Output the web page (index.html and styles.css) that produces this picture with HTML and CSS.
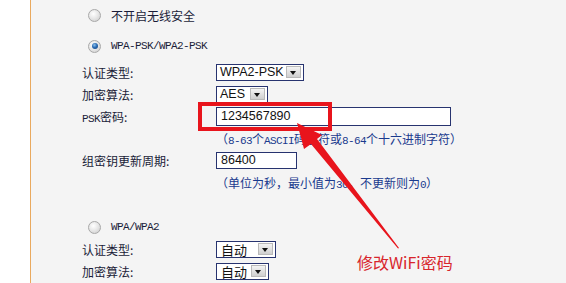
FILE: index.html
```html
<!DOCTYPE html>
<html>
<head>
<meta charset="utf-8">
<link rel="stylesheet" href="styles.css">
</head>
<body>
<div class="page">
  <div class="gutter"></div>
  <div class="panel">
    <div class="radio-row r1"><span class="radio"></span><span class="cn">不开启无线安全</span></div>
    <div class="radio-row r2"><span class="radio checked"></span><span class="en">WPA-PSK/WPA2-PSK</span></div>
    <div class="form first">
      <div class="row"><span class="label">认证类型:</span><div class="select w88"><span class="val">WPA2-PSK</span><span class="btn"></span></div></div>
      <div class="row"><span class="label">加密算法:</span><div class="select w52"><span class="val">AES</span><span class="btn"></span></div></div>
      <div class="row"><span class="label"><span class="en">PSK</span>密码:</span><div class="input w235">1234567890</div></div>
      <div class="row"><span class="label"></span><span class="hint">（<span class="en">8-63</span>个<span class="en">ASCII</span>码字符或<span class="en">8-64</span>个十六进制字符）</span></div>
      <div class="row"><span class="label">组密钥更新周期:</span><div class="input w81">86400</div></div>
      <div class="row"><span class="label"></span><span class="hint">（单位为秒，最小值为<span class="en">30</span>，不更新则为<span class="en">0</span>）</span></div>
    </div>
    <div class="radio-row r3"><span class="radio"></span><span class="en">WPA/WPA2</span></div>
    <div class="form">
      <div class="row"><span class="label">认证类型:</span><div class="select w60"><span class="val cnv">自动</span><span class="btn"></span></div></div>
      <div class="row"><span class="label">加密算法:</span><div class="select w53"><span class="val cnv">自动</span><span class="btn"></span></div></div>
    </div>
  </div>
  <div class="right"></div>
</div>
<div class="redbox"></div>
<svg class="arrow" width="566" height="283" viewBox="0 0 566 283">
  <polygon fill="#e8141c" points="297,123 322,135 317,139 399,248 398,248.5 311,144 304,149"/>
</svg>
<div class="note">修改WiFi密码</div>
</body>
</html>
```

FILE: styles.css
```css
html, body {
  margin: 0;
  padding: 0;
  background: #ffffff;
}
body {
  position: relative;
  width: 566px;
  height: 283px;
  overflow: hidden;
  font-family: "Noto Sans CJK SC", sans-serif;
  font-size: 12px;
  color: #1a1c38;
}
.page {
  display: flex;
  height: 283px;
}
.gutter {
  width: 30px;
  flex: none;
}
.panel {
  width: 500px;
  flex: none;
  background: #f4f4f4;
  border-left: 1px solid #e9a95e;
  border-right: 1px solid #e9a95e;
  padding: 4px 0 0 51px;
  box-sizing: content-box;
}
.right {
  flex: 1;
  background: #fffffc;
}
.en {
  font-family: "Liberation Mono", monospace;
  font-size: 11px;
  letter-spacing: -0.6px;
}
.radio-row {
  display: flex;
  align-items: center;
  height: 22px;
  padding-left: 6px;
}
.r2 { margin-top: 9px; }
.r3 { margin-top: 23px; }
.radio {
  width: 11px;
  height: 11px;
  border-radius: 50%;
  border: 1px solid #a8a8a8;
  background: radial-gradient(circle at 40% 35%, #ffffff 0%, #e6e6e6 50%, #c9c9c9 100%);
  margin-right: 10px;
  position: relative;
  flex: none;
}
.radio.checked::after {
  content: "";
  position: absolute;
  left: 2.5px;
  top: 2.5px;
  width: 6px;
  height: 6px;
  border-radius: 50%;
  background: radial-gradient(circle at 40% 35%, #8fc2ee 0%, #2a6cb4 45%, #0f3c78 100%);
}
.form.first { margin-top: 4px; }
.row {
  display: flex;
  align-items: center;
  height: 22px;
}
.label {
  width: 134px;
  flex: none;
}
.hint {
  color: #1a3a8e;
  white-space: nowrap;
}
.select, .input {
  box-sizing: border-box;
  background: #ffffff;
  border: 1px solid #27336f;
  font-family: "Liberation Sans", Arial, sans-serif;
  font-size: 12.5px;
  color: #111;
  white-space: nowrap;
}
.select {
  height: 17px;
  display: flex;
  align-items: center;
  justify-content: space-between;
}
.val {
  padding-left: 3px;
  line-height: 15px;
  white-space: nowrap;
}
.val.cnv {
  font-family: "Noto Sans CJK SC", sans-serif;
  font-size: 13px;
  padding-left: 4px;
}
.btn {
  width: 13px;
  height: 10px;
  margin-right: 2px;
  border: 1px solid #b9b9b9;
  background: linear-gradient(#f4f4f4, #cfcfcf);
  position: relative;
  flex: none;
}
.btn::after {
  content: "";
  position: absolute;
  left: 3px;
  top: 4px;
  border-left: 3.5px solid transparent;
  border-right: 3.5px solid transparent;
  border-top: 4px solid #111;
}
.w88 { width: 88px; }
.w52 { width: 52px; }
.w60 { width: 60px; }
.w53 { width: 53px; }
.input {
  height: 19px;
  line-height: 17px;
  padding-left: 4px;
}
.w235 { width: 235px; }
.w81 { width: 81px; height: 17px; line-height: 15px; }
.redbox {
  position: absolute;
  left: 198px;
  top: 102px;
  width: 134px;
  height: 29px;
  box-sizing: border-box;
  border: 4px solid #e8141c;
}
.arrow {
  position: absolute;
  left: 0;
  top: 0;
}
.note {
  position: absolute;
  left: 357px;
  top: 251px;
  font-family: "Noto Sans CJK SC", sans-serif;
  font-size: 16px;
  line-height: 22px;
  color: #d8262c;
}
```
